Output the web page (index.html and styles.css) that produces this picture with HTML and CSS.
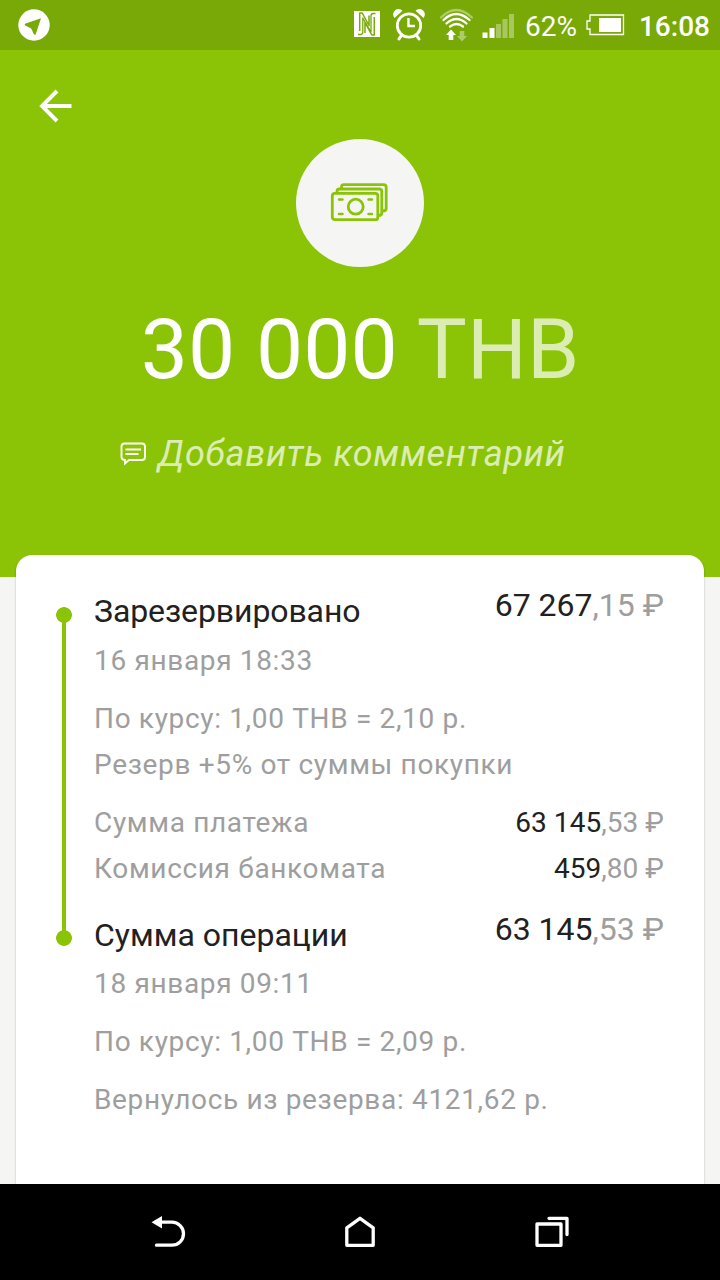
FILE: index.html
```html
<!DOCTYPE html>
<html lang="ru">
<head>
<meta charset="utf-8">
<title>Операция</title>
<link rel="stylesheet" href="styles.css">
</head>
<body>
<div class="screen">
  <div class="statusbar">
    <svg class="telegram" width="32" height="32" viewBox="0 0 32 32"><circle cx="16" cy="16" r="15.7" fill="#fff"/><path d="M7 14.8 23 9.3 17.6 25.5Q16.5 26.3 15.8 25L13.2 19.6 7.4 16.4Q6.2 15.4 7 14.8Z" fill="#78a906"/></svg>
    <svg class="indicators" width="170" height="50" viewBox="350 0 170 50">
      <path d="M354 11h26v26h-26z" fill="#fff"/>
      <path d="M358 34.500h2.500q2.300 0 2.300-2.500V18L371 32V16q0-2.500 2-2.500h2.500" fill="none" stroke="#78a906" stroke-width="1.300" stroke-linejoin="round"/>
      <path d="M359.700 31V13h2.500l6.800 12.500V15.500M374.300 17v18h-2.500L365 22.500V33" fill="none" stroke="#78a906" stroke-width="1.500" stroke-linejoin="round"/>
      <circle cx="409" cy="25.500" r="11.700" fill="none" stroke="#fff" stroke-width="2.800"/>
      <path d="M408.500 18v8h6.500" fill="none" stroke="#fff" stroke-width="2.400"/>
      <path d="M401 36l-2 3M417 36l2 3" stroke="#fff" stroke-width="3" stroke-linecap="round"/>
      <path d="M394.500 18a5.300 5.300 0 0 1 8-7.200zM423.500 18a5.300 5.300 0 0 0-8-7.200z" fill="#fff"/>
      <g fill="none" stroke="#fff" stroke-width="2.300" stroke-linecap="round">
        <path d="M441 17.500q15-15 31 0" opacity=".4"/>
        <path d="M443.500 20q12.500-12 26 0M446.500 23.500q10-9 20 0M450 26.500q6.500-5 13 0"/>
      </g>
      <path d="M451 29.500l5 5.500h-2.700v5h-4.600v-5h-2.700z" fill="#fff"/>
      <path d="M462 41.500l-5-5.500h2.700v-5h4.600v5h2.700z" fill="#fff" opacity=".4"/>
      <path d="M482.500 32.500h5V38h-5zM489.500 28h5v10h-5z" fill="#fff"/>
      <path d="M496 24h5v14h-5zM502.500 19h5v19h-5zM509 14h5v24h-5z" fill="#fff" opacity=".36"/>
    </svg>
    <span class="percent">62%</span>
    <svg class="battery" width="39" height="22" viewBox="0 0 39 22"><path d="M4 1h33.500v19.500H4v-5.500H1V7h3z" fill="none" stroke="#fff" stroke-width="1.300"/><path d="M13 4h22v14H13z" fill="#fff"/></svg>
    <span class="clock">16:08</span>
  </div>

  <div class="hero">
    <svg class="back" width="34" height="34" viewBox="0 0 34 34"><path d="M18 2 3 17l15 15M3.500 17H32.500" fill="none" stroke="#fff" stroke-width="3.900"/></svg>
    <div class="badge">
      <svg class="banknotes" width="60" height="42" viewBox="0 0 60 42" fill="none" stroke="#8bc306" stroke-width="2.800">
        <rect x="3.300" y="11.400" width="45.500" height="26.300" rx="2.500"/>
        <path d="M8 11V9.200q0-2.200 2.200-2.200H50q2.800 0 2.800 2.500V31q0 2.500-3.500 2.500M12.500 6.500V5q0-2.300 2.300-2.300H54.500q2.700 0 2.700 2.700V26.500q0 2.500-3.500 2.500"/>
        <circle cx="26.700" cy="24.700" r="7.500"/>
        <path d="M10 17.500h3.500M39.500 17.500h3.500M10 32h3.500M39.500 32h3.500" stroke-width="2.500" stroke-linecap="round"/>
      </svg>
    </div>
    <div class="total">30 000 <span class="currency">THB</span></div>
    <div class="comment">
      <svg width="26" height="24" viewBox="0 0 26 24" fill="none" stroke="#fff" stroke-width="1.900"><path d="M4.500 1.500h17.500q3 0 3 3v10.500q0 3-3 3H9L5 21.500V18Q1.500 18 1.500 15V4.500q0-3 3-3Z"/><path d="M5.500 7.500h15.500M5.500 12h13"/></svg>
      <span class="hint">Добавить комментарий</span>
    </div>
  </div>

  <div class="card">
    <div class="timeline"></div>
    <div class="details">
      <div class="step reserved">
        <div class="row heading"><span>Зарезервировано</span><span class="sum">67 267<span class="minor">,15 ₽</span></span></div>
        <div class="row">16 января 18:33</div>
        <div class="group">
          <div class="row">По курсу: 1,00 THB = 2,10 р.</div>
          <div class="row">Резерв +5% от суммы покупки</div>
        </div>
        <div class="group">
          <div class="row"><span>Сумма платежа</span><span class="sum">63 145<span class="minor">,53 ₽</span></span></div>
          <div class="row"><span>Комиссия банкомата</span><span class="sum">459<span class="minor">,80 ₽</span></span></div>
        </div>
      </div>
      <div class="step">
        <div class="row heading"><span>Сумма операции</span><span class="sum">63 145<span class="minor">,53 ₽</span></span></div>
        <div class="row">18 января 09:11</div>
        <div class="group"><div class="row">По курсу: 1,00 THB = 2,09 р.</div></div>
        <div class="group"><div class="row">Вернулось из резерва: 4121,62 р.</div></div>
      </div>
    </div>
  </div>

  <div class="navbar">
    <svg width="36" height="36" viewBox="0 0 36 36"><path d="M9 8.200h13a11.200 11.200 0 0 1 0 23H6.500" fill="none" stroke="#fff" stroke-width="3.300" stroke-linecap="round"/><path d="M1.500 8.200 12 2v12.500z" fill="#fff"/></svg>
    <svg width="36" height="36" viewBox="0 0 36 36" fill="none" stroke="#fff" stroke-width="3.300" stroke-linejoin="round"><path d="M4.800 31.300V13.800L18 4.300 31.200 13.800v17.500z"/></svg>
    <svg width="36" height="36" viewBox="0 0 36 36" fill="none" stroke="#fff" stroke-width="3.300" stroke-linejoin="round" stroke-linecap="round"><path d="M3 10h24v21.300H3zM15 4.300h18V20.500"/></svg>
  </div>
</div>
</body>
</html>
```

FILE: styles.css
```css
body {
  margin: 0;
  font-family: Roboto, "Noto Sans", sans-serif;
}
.screen {
  width: 720px;
  height: 1280px;
  display: flex;
  flex-direction: column;
  overflow: hidden;
  background: #f5f5f4;
}
.statusbar {
  height: 50px;
  flex: none;
  box-sizing: border-box;
  padding: 0 10px 0 18px;
  display: flex;
  align-items: center;
  background: #78a906;
  color: #fff;
  font-size: 28px;
}
.indicators {
  margin-left: auto;
  margin-right: 5px;
}
.percent {
  width: 53px;
  line-height: 50px;
  padding-top: 4px;
}
.battery {
  margin: 0 14px 0 8px;
}
.clock {
  line-height: 50px;
  padding-top: 3px;
  font-weight: 500;
}
.hero {
  height: 527px;
  flex: none;
  display: flex;
  flex-direction: column;
  align-items: center;
  background: #8bc306;
}
.back {
  align-self: flex-start;
  margin: 39px 0 0 39px;
}
.badge {
  width: 128px;
  height: 128px;
  margin-top: 16px;
  flex: none;
  display: flex;
  align-items: center;
  justify-content: center;
  border-radius: 50%;
  background: #f5f6f4;
}
.banknotes {
  margin-right: 2px;
}
.total {
  margin-top: 33px;
  height: 100px;
  line-height: 100px;
  font-size: 84px;
  color: #fff;
  white-space: nowrap;
}
.currency {
  color: #dcedb4;
}
.comment {
  align-self: flex-start;
  margin: 31px 0 0 120px;
  display: flex;
  align-items: center;
  gap: 12px;
}
.hint {
  line-height: 46px;
  font-size: 36px;
  font-style: italic;
  letter-spacing: .7px;
  color: #dcedb4;
  white-space: nowrap;
}
.card {
  flex: 1;
  margin: -22px 16px 0;
  padding: 33px 40px 0;
  display: flex;
  align-items: flex-start;
  gap: 22px;
  border-radius: 16px 16px 0 0;
  background: #fff;
  box-shadow: 0 1px 2px rgba(0, 0, 0, .3);
}
.timeline {
  width: 16px;
  height: 339px;
  margin-top: 19px;
  flex: none;
  background:
    radial-gradient(circle at 8px 8px, #8bc306 7.500px, transparent 8.200px),
    radial-gradient(circle at 8px 331px, #8bc306 7.500px, transparent 8.200px),
    linear-gradient(#8bc306, #8bc306) 6px 8px / 4px 323px no-repeat;
}
.details {
  flex: 1;
  display: flex;
  flex-direction: column;
  gap: 20px;
}
.group {
  margin-top: 12px;
}
.row {
  display: flex;
  justify-content: space-between;
  line-height: 46px;
  font-size: 28px;
  letter-spacing: .66px;
  color: #9e9e9e;
  white-space: nowrap;
}
.heading {
  margin-bottom: 3px;
  font-size: 32px;
  letter-spacing: 0;
  color: #212121;
}
.reserved .heading {
  margin-bottom: 4px;
  letter-spacing: -.1px;
}
.sum {
  color: #212121;
  letter-spacing: .05px;
}
.heading .sum {
  margin-top: -6px;
  height: 52px;
  letter-spacing: 0;
}
.minor {
  color: #9e9e9e;
}
.navbar {
  height: 96px;
  flex: none;
  display: flex;
  align-items: center;
  justify-content: center;
  gap: 156px;
  background: #000;
  position: relative;
}
```
